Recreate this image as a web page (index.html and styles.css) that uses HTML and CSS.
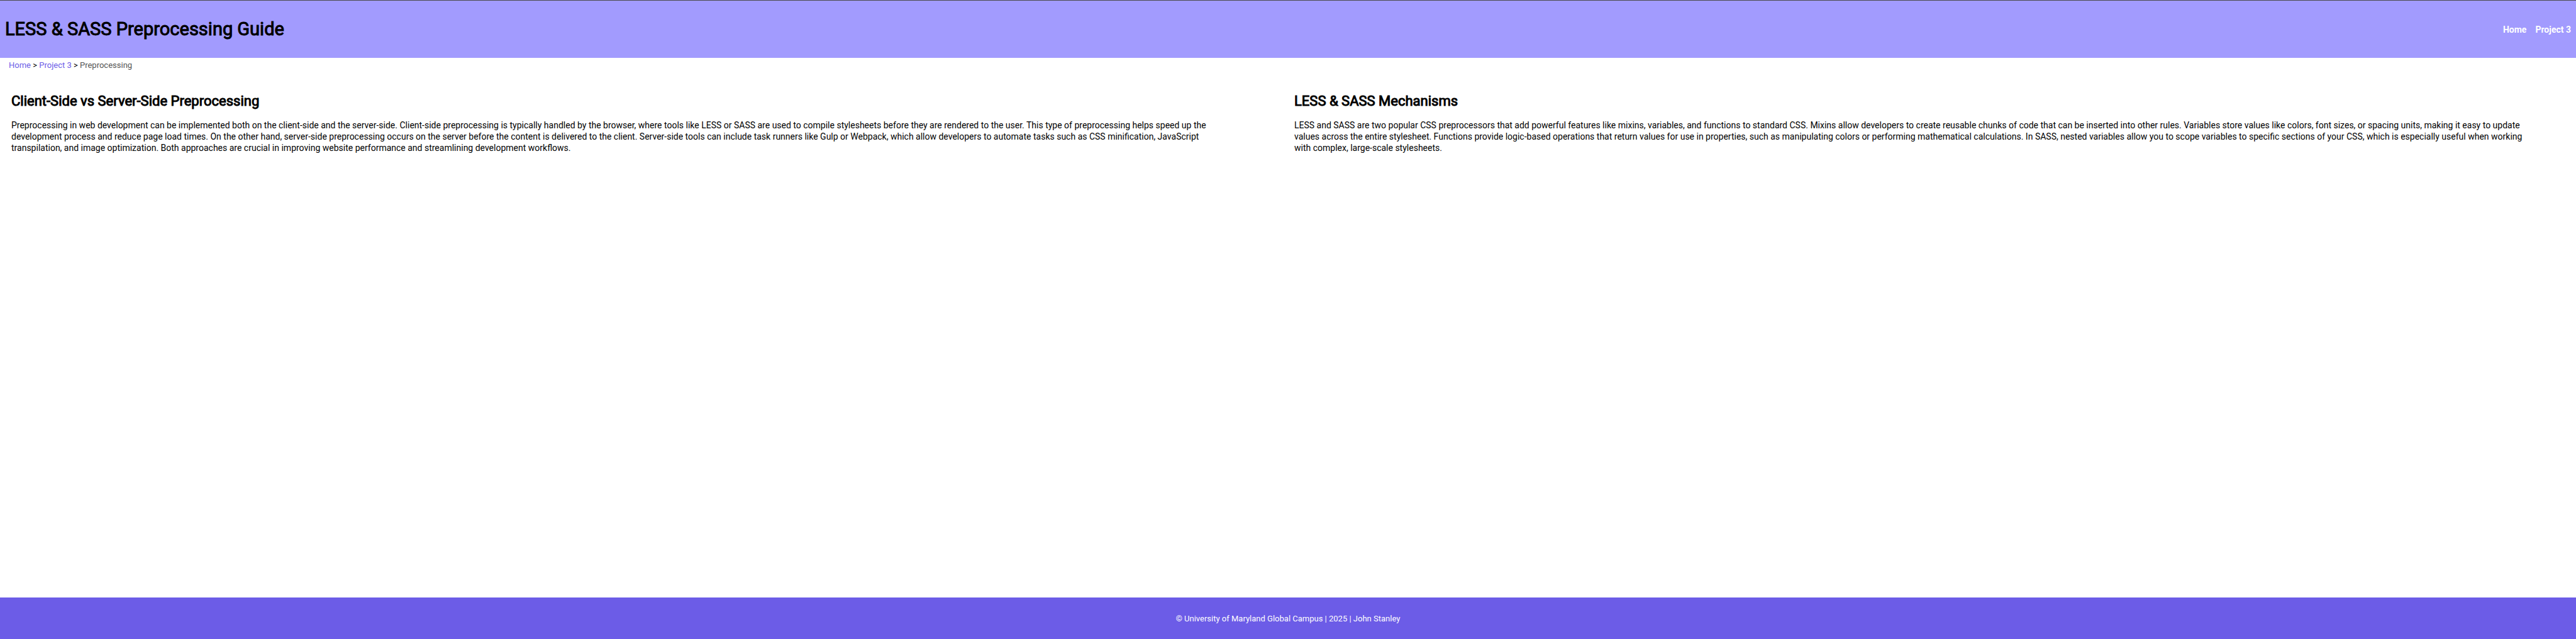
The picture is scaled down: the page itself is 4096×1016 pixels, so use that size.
FILE: index.html
```html
<!DOCTYPE html>
<html lang="en">
<head>
  <meta charset="utf-8">
  <title>LESS &amp; SASS Preprocessing Guide</title>
  <link rel="stylesheet" href="styles.css">
</head>
<body>
  <header class="site-header">
    <h1 class="site-title">LESS &amp; SASS Preprocessing Guide</h1>
    <nav class="site-nav" aria-label="Main">
      <a class="site-nav-link" href="#">Home</a>
      <a class="site-nav-link" href="#">Project 3</a>
    </nav>
  </header>
  <nav class="breadcrumbs" aria-label="Breadcrumb">
    <a class="breadcrumb-link" href="#">Home</a> &gt;
    <a class="breadcrumb-link" href="#">Project 3</a> &gt;
    <span class="breadcrumb-current">Preprocessing</span>
  </nav>
  <main class="content">
    <section class="topic">
      <h2 class="topic-title">Client-Side vs Server-Side Preprocessing</h2>
      <p class="topic-text">Preprocessing in web development can be implemented both on the client-side and the server-side. Client-side preprocessing is typically handled by the browser, where tools like LESS or SASS are used to compile stylesheets before they are rendered to the user. This type of preprocessing helps speed up the development process and reduce page load times. On the other hand, server-side preprocessing occurs on the server before the content is delivered to the client. Server-side tools can include task runners like Gulp or Webpack, which allow developers to automate tasks such as CSS minification, JavaScript transpilation, and image optimization. Both approaches are crucial in improving website performance and streamlining development workflows.</p>
    </section>
    <section class="topic">
      <h2 class="topic-title">LESS &amp; SASS Mechanisms</h2>
      <p class="topic-text">LESS and SASS are two popular CSS preprocessors that add powerful features like mixins, variables, and functions to standard CSS. Mixins allow developers to create reusable chunks of code that can be inserted into other rules. Variables store values like colors, font sizes, or spacing units, making it easy to update values across the entire stylesheet. Functions provide logic-based operations that return values for use in properties, such as manipulating colors or performing mathematical calculations. In SASS, nested variables allow you to scope variables to specific sections of your CSS, which is especially useful when working with complex, large-scale stylesheets.</p>
    </section>
  </main>
  <footer class="site-footer">© University of Maryland Global Campus | 2025 | John Stanley</footer>
</body>
</html>
```

FILE: styles.css
```css
body {
  display: flex;
  flex-direction: column;
  min-height: 100vh;
  margin: 0;
  background: #fff;
  color: #000;
  font-family: Roboto, sans-serif;
  font-size: 14px;
  line-height: 18px;
}

.site-header {
  display: flex;
  align-items: center;
  justify-content: space-between;
  padding: 28px 8px;
  border-top: 1px solid #4a4a4a;
  background: #a29bfe;
}

.site-title {
  margin: 0;
  font-size: 29px;
  font-weight: 400;
  line-height: 35px;
  -webkit-text-stroke: 1px currentColor;
}

.site-nav {
  display: flex;
  gap: 14px;
}

.site-nav-link {
  color: #fff;
  font-weight: 700;
  text-decoration: none;
}

.breadcrumbs {
  padding: 3px 14px;
  font-size: 13px;
}

.breadcrumb-link {
  color: #6c5ce7;
  text-decoration: none;
}

.breadcrumb-current {
  color: #555;
}

.content {
  display: grid;
  flex: 1;
  grid-template-columns: 1fr 1fr;
  padding: 32px 8px;
}

.topic {
  padding: 0 68px 0 10px;
}

.topic-title {
  margin: 0 0 16px;
  font-size: 22px;
  font-weight: 400;
  line-height: 26px;
  -webkit-text-stroke: 1px currentColor;
}

.topic-text {
  margin: 0;
}

.site-footer {
  padding: 25px 24px 23px;
  background: #6c5ce7;
  color: #fff;
  font-size: 13px;
  text-align: center;
}
```
